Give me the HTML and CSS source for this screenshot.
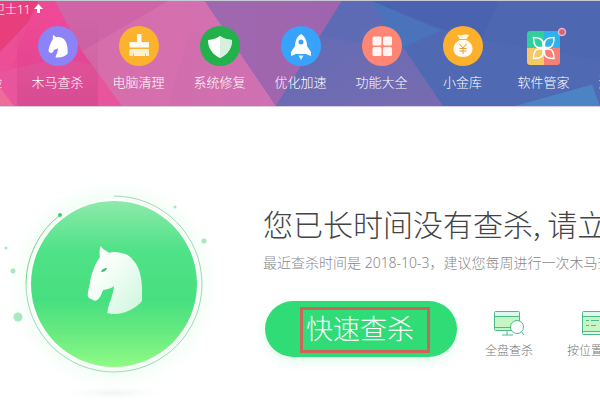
FILE: index.html
```
<!DOCTYPE html>
<html lang="zh-CN">
<head>
    <meta charset="UTF-8">
    <meta name="viewport" content="width=device-width, initial-scale=1.0">
    <title>木马查杀</title>
    <link rel="stylesheet" href="styles.css">
</head>
<body>
    <header class="header">
        <svg class="header-bg" viewBox="0 0 600 107" preserveAspectRatio="none" aria-hidden="true">
            <defs>
                <linearGradient id="pink" x1="0" x2="1"><stop offset="0" stop-color="#ee4a92"/><stop offset="1" stop-color="#ef479f"/></linearGradient>
                <linearGradient id="rose" x1="0" x2="1"><stop offset="0" stop-color="#d669a4"/><stop offset="1" stop-color="#cf71b3"/></linearGradient>
                <linearGradient id="violet" x1="0" x2="1"><stop offset="0" stop-color="#9e68ae"/><stop offset="1" stop-color="#a064ae"/></linearGradient>
                <linearGradient id="indigo" x1="0" x2="1" y1="0" y2="1"><stop offset="0" stop-color="#5c6cb5"/><stop offset="1" stop-color="#796bb1"/></linearGradient>
            </defs>
            <rect width="600" height="107" fill="#4f69b3"/>
            <polygon points="0,0 60,0 125,107 0,107" fill="url(#pink)"/>
            <polygon points="0,0 38,0 28,22 0,52" fill="#e83f7c"/>
            <polygon points="28,22 12,68 0,72 0,52" fill="#ec4f95"/>
            <polygon points="0,72 60,58 100,66 122,107 0,107" fill="#e8559c"/>
            <polygon points="0,88 14,107 0,107" fill="#ee6d98"/>
            <polygon points="55,0 205,0 276,107 122,107 82,51" fill="url(#rose)"/>
            <polygon points="55,0 168,0 82,51" fill="#cf65a6"/>
            <polygon points="168,0 205,0 232,42 190,30 168,107 122,107 82,51" fill="#d973b1" opacity=".4"/>
            <polygon points="205,0 342,0 276,107" fill="url(#violet)"/>
            <polygon points="342,0 372,0 443,107 276,107" fill="url(#indigo)"/>
            <polygon points="342,0 372,0 396,48 320,36" fill="#5a6bb6" opacity=".7"/>
            <polygon points="372,0 600,0 500,42 440,28" fill="#4a63b0"/>
            <polygon points="372,0 441,30 398,50" fill="#4a73bb"/>
            <polygon points="498,0 600,0 600,60 482,40" fill="#4d67b1"/>
            <polygon points="515,107 592,85 600,107" fill="#4c83c4"/>
        </svg>

        <div class="title-bar">卫士11
            <svg width="9" height="10" viewBox="0 0 9 10" aria-hidden="true"><path d="M4.500 0 9 5H6v4H3V5H0z" fill="#fff"/></svg>
        </div>

        <nav class="nav">
            <a href="#" class="nav-item"><svg class="nav-icon" viewBox="0 0 40 40" aria-hidden="true"><circle cx="20" cy="20" r="20" fill="#3fb6f5"/></svg>电脑体检</a>
            <a href="#" class="nav-item active">
                <svg class="nav-icon" viewBox="0 0 40 40" aria-hidden="true">
                    <circle cx="20" cy="20" r="20" fill="#8c83f8"/>
                    <g transform="translate(-20 -15.500) scale(.35 .335)"><path d="M101 73C104 75 106 78 110 80c5-1 8-1 11 0 12 3 17 14 19 24 2 8 2 15 2 24-7 9-20 14-35 12 2-8 8-18 7-27-4 3-8 3-11 4-2 4-2 8-8 10-3 1-6-3-8-5 1-12 5-25 13-38-1-4-1-7 1-11z" fill="#fff"/></g>
                </svg>木马查杀
            </a>
            <a href="#" class="nav-item">
                <svg class="nav-icon" viewBox="0 0 40 40" aria-hidden="true">
                    <circle cx="20" cy="20" r="20" fill="#fcb22d"/>
                    <path d="M18 8h4.500v8H30v5.500H10.500V16H18z" fill="#fffaf0"/>
                    <path d="M10.500 23H30v7h-3v-4l-1 4H15v-4l-1.500 4h-3z" fill="#fff2d4"/>
                </svg>电脑清理
            </a>
            <a href="#" class="nav-item">
                <svg class="nav-icon" viewBox="0 0 40 40" aria-hidden="true">
                    <circle cx="20" cy="20" r="20" fill="#22b14b"/>
                    <path d="M20 10c3 2.500 7 3.500 12 4 0 8-4 14-12 18C12 28 8 22 8 14c5-.5 9-1.500 12-4z" fill="#fff"/>
                    <path d="M20 10c3 2.500 7 3.500 12 4 0 8-4 14-12 18z" fill="#d5f0dc"/>
                </svg>系统修复
            </a>
            <a href="#" class="nav-item">
                <svg class="nav-icon" viewBox="0 0 40 40" aria-hidden="true">
                    <circle cx="20" cy="20" r="20" fill="#38a3fc"/>
                    <path d="M20 8c4 2.500 6 7 6 12l4 6v4l-5-2H15l-5 2v-4l4-6c0-5 2-9.500 6-12z" fill="#fff"/>
                    <circle cx="20" cy="16" r="2.500" fill="#38a3fc"/>
                    <path d="M17.500 29.500h5L20 34z" fill="#d7edff"/>
                </svg>优化加速
            </a>
            <a href="#" class="nav-item">
                <svg class="nav-icon" viewBox="0 0 40 40" aria-hidden="true">
                    <circle cx="20" cy="20" r="20" fill="#ff8574"/>
                    <g fill="#fff5f2"><rect x="10.500" y="10.500" width="9" height="9" rx="1.500"/><rect x="21" y="10.500" width="9" height="9" rx="1.500"/><rect x="10.500" y="21" width="9" height="9" rx="1.500"/><rect x="21" y="21" width="9" height="9" rx="1.500"/></g>
                </svg>功能大全
            </a>
            <a href="#" class="nav-item">
                <svg class="nav-icon" viewBox="0 0 40 40" aria-hidden="true">
                    <circle cx="20" cy="20" r="20" fill="#fcb02b"/>
                    <path d="M14 8.500c2 1 3 1 5 .5 2-.7 4-.5 7 0L23.500 13h-7z" fill="#fff6e0"/>
                    <path d="M17 14h6c4 2 6.500 4.500 6.500 9 0 5-4 8-9.500 8s-9.500-3-9.500-8c0-4.500 2.500-7 6.500-9z" fill="#fffaf0"/>
                    <path d="m16.500 18 3.500 4 3.500-4M20 22v6M16.500 22.500h7M16.500 25h7" fill="none" stroke="#e0a040" stroke-width="1"/>
                </svg>小金库
            </a>
            <a href="#" class="nav-item">
                <svg class="nav-icon" viewBox="0 0 40 40" aria-hidden="true">
                    <clipPath id="tile"><rect x="3" y="5" width="33" height="34" rx="3"/></clipPath>
                    <g clip-path="url(#tile)"><path d="M3 5h17v17H3z" fill="#31cf9b"/><path d="M20 5h17v17H20z" fill="#2db2ee"/><path d="M3 22h17v17H3z" fill="#f6c866"/><path d="M20 22h17v17H20z" fill="#f77f78"/></g>
                    <path d="M19 21.500h-4c-4 0-5.500-4-5.500-10 6 0 9.500 2 9.500 6zM20.500 21.500h4c4 0 5.500-4 5.500-10-6 0-9.500 2-9.500 6zM19 23h-4c-4 0-5.500 3-5.500 9.500 6 0 9.500-1.500 9.500-5zM20.500 23h4c4 0 5.500 3 5.500 9.500-6 0-9.500-1.500-9.500-5z" fill="none" stroke="#fff" stroke-width="1.500"/>
                    <circle cx="38" cy="6" r="3.500" fill="#e2606c" stroke="#e5b4cf" stroke-width="1.500"/>
                </svg>软件管家
            </a>
            <a href="#" class="nav-item"><svg class="nav-icon" viewBox="0 0 40 40" aria-hidden="true"><circle cx="20" cy="20" r="20" fill="#8c83f8"/></svg>游戏管家</a>
        </nav>
    </header>

    <main class="main">
        <svg class="scan-art" viewBox="0 0 228 228" aria-hidden="true">
            <defs>
                <radialGradient id="halo"><stop offset=".75" stop-color="#effef3"/><stop offset="1" stop-color="#fff" stop-opacity="0"/></radialGradient>
                <linearGradient id="disc" x2="0" y2="1"><stop offset="0" stop-color="#8deaab"/><stop offset=".3" stop-color="#4fe287"/><stop offset=".6" stop-color="#47e080"/><stop offset=".8" stop-color="#69ea80"/><stop offset="1" stop-color="#8ffb86"/></linearGradient>
                <linearGradient id="horse" x2="1" y2="1"><stop offset=".3" stop-color="#fbfffc"/><stop offset="1" stop-color="#ccf6dc"/></linearGradient>
                <radialGradient id="ground"><stop offset="0" stop-color="#eef5f0"/><stop offset="1" stop-color="#fff" stop-opacity="0"/></radialGradient>
            </defs>
            <circle cx="114" cy="112" r="112" fill="url(#halo)"/>
            <ellipse cx="114" cy="220" rx="60" ry="8" fill="url(#ground)"/>
            <circle cx="114" cy="111" r="85" fill="#fff"/>
            <circle cx="114" cy="111" r="83" fill="url(#disc)"/>
            <path d="M114 23a88 88 0 1 1-88 88" fill="none" stroke="#a7d5bb" stroke-width="1"/>
            <path d="M60 42a88 88 0 0 0-34 69" fill="none" stroke="#7fd08f" stroke-width="1"/>
            <circle cx="60" cy="42" r="2" fill="#46c965"/>
            <g fill="#a5e9be"><circle cx="175" cy="34" r="1.500"/><circle cx="204" cy="68" r="2.500"/><circle cx="6" cy="75" r="1.500"/><circle cx="13" cy="98" r="2.500"/><circle cx="18" cy="144" r="4.500"/></g>
            <path d="M100.700 73C102 76 106 78 109.300 79.700c4-.8 7-.8 10.700 0 6 .8 10 3 13 7.300 4 4 6.500 10 7.700 16.700 1 5 1.300 9 1.300 13.300v10.700c-2 3-7 7-11.700 9.300-5 2.500-11 4-15 4-4 0-6 0-8-.7.5-5 1.500-9 3.400-13.300 1.500-5 3-9 3.300-14-3 3-7 3-10.700 4-2 3-2 6-4.300 8.300-1 1.500-2.500 2.500-4 2.400-1.500 0-2.500-.7-3.300-1.700-2 0-3.500-1.500-4-3C88 118 89 114 90 110.300c.5-5 1.500-9 3.300-13.300 1.500-5 4-9 6.700-12.700-.9-4-.5-8 .7-11.300z" fill="url(#horse)"/>
            <path d="M101 99c1-3 3-4 6-4-1 3-3 4-6 4z" fill="#43b974"/>
        </svg>

        <section class="content">
            <h1 class="headline">您已长时间没有查杀, 请立即查杀</h1>
            <p class="tip">最近查杀时间是 2018-10-3，建议您每周进行一次木马查杀</p>
            <div class="actions">
                <div class="scan">
                    <button type="button" class="scan-btn">快速查杀</button>
                    <span class="scan-mark"></span>
                </div>
                <a href="#" class="mode">
                    <svg class="mode-icon" viewBox="0 0 32 26" fill="none" stroke="#4dba8a" aria-hidden="true">
                        <rect x="1.500" y="1.500" width="25" height="19" rx="1" fill="#c6f6c4"/>
                        <path d="M2 2h24v4H2z" fill="#dff8ef" stroke="none"/>
                        <path d="M1.500 6.500h25M2 17.500h18M14 21v4M9 25h11M28 21l3 4"/>
                        <circle cx="24" cy="17" r="6.500" fill="#fff"/>
                    </svg>全盘查杀
                </a>
                <a href="#" class="mode">
                    <svg class="mode-icon" viewBox="0 0 32 26" fill="none" stroke="#4dba8a" aria-hidden="true">
                        <rect x="1.500" y="1.500" width="29" height="23" rx="1" fill="#c6f6c4"/>
                        <path d="M2 2h28v4H2zM2 21h28v3H2z" fill="#dff8ef" stroke="none"/>
                        <path d="M1.500 6.500h29M1.500 21.500h29M5 10.500h3M10 10.500h8M5 15.500h3M10 15.500h5"/>
                    </svg>按位置查杀
                </a>
            </div>
        </section>
    </main>
</body>
</html>
```
FILE: styles.css
```
body {
    font-family: "Noto Sans", "Noto Sans CJK SC", sans-serif;
    margin: 0;
    background: #fff;
    color: #555;
    overflow: hidden;
}
a {
    text-decoration: none;
}

/* Header */
.header {
    position: relative;
    overflow: hidden;
    color: #fff;
    border-top: 1px solid #c9c9d6;
    border-bottom: 1px solid #d9cbe4;
}
.header-bg {
    position: absolute; /* faceted backdrop behind the nav */
    top: 0;
    left: 0;
    width: 100%;
    height: 100%;
}
.title-bar {
    position: relative;
    font-size: 12px;
    font-weight: 300;
    line-height: 18px;
    height: 16px;
    margin-left: -7px;
}
.nav {
    position: relative;
    display: flex;
    margin-left: -64px;
}
.nav-item {
    flex: 0 0 81px;
    display: flex;
    flex-direction: column;
    align-items: center;
    gap: 6px;
    padding: 9px 0 13px;
    font-size: 13px;
    font-weight: 300;
    line-height: 21px;
    color: #fff;
    white-space: nowrap;
}
.nav-item.active {
    background: linear-gradient(rgba(150, 40, 110, 0), rgba(150, 40, 110, 0.2));
}
.nav-icon {
    width: 40px;
    height: 40px;
    overflow: visible;
}

/* Main area */
.main {
    display: flex;
    align-items: flex-start;
    gap: 35px;
    padding-top: 66px;
}
.scan-art {
    flex: 0 0 228px;
    height: 228px;
}
.content {
    padding-top: 28px;
    white-space: nowrap;
}
.headline {
    margin: 0;
    font-family: "Noto Sans CJK SC", sans-serif;
    font-size: 30px;
    font-weight: 300;
    line-height: 44px;
    color: #444;
}
.tip {
    margin: 6px 0 0;
    font-size: 14px;
    font-weight: 300;
    line-height: 24px;
    color: #888;
}
.actions {
    display: flex;
    align-items: flex-start;
    padding: 26px 0 0 2px;
}
.scan {
    position: relative;
    margin-right: 28px;
}
.scan-btn {
    width: 192px;
    height: 56px;
    border: none;
    border-radius: 28px;
    background: #2fdc76;
    box-shadow: 0 4px 12px rgba(47, 220, 118, 0.15);
    color: #fff;
    font-family: "Noto Sans CJK SC", sans-serif;
    font-size: 27px;
    font-weight: 300;
    line-height: 54px;
    padding: 0 2px 2px 0;
    cursor: pointer;
}
/* Red frame over the button */
.scan-mark {
    position: absolute;
    top: 6px;
    left: 35px;
    width: 124px;
    height: 40px;
    border: 3px solid #c9655b;
    pointer-events: none;
}
.mode {
    display: flex;
    flex-direction: column;
    align-items: center;
    gap: 6px;
    padding-top: 9px;
    margin-right: 34px;
    font-size: 12px;
    font-weight: 300;
    line-height: 18px;
    color: #777;
}
.mode-icon {
    width: 32px;
    height: 26px;
}
```
